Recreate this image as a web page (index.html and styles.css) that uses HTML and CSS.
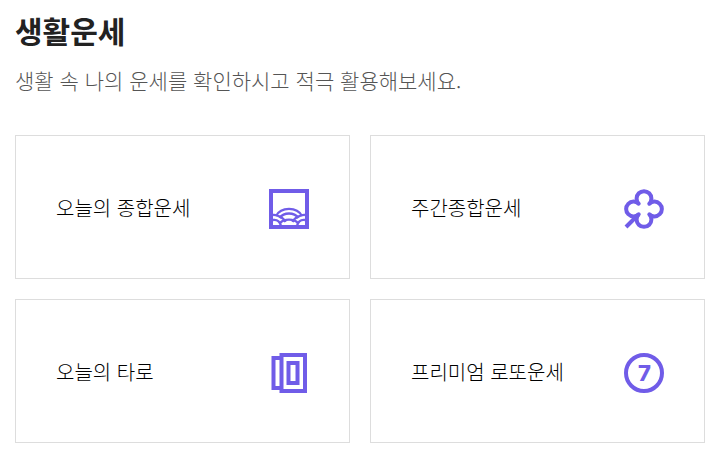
FILE: index.html
```html
<!DOCTYPE html>
<html lang="ko">
<head>
    <meta charset="UTF-8">
    <meta name="viewport" content="width=device-width, initial-scale=1.0">
    <title>생활운세</title>
    <link rel="stylesheet" href="styles.css">
</head>
<body>

    <main class="fortune">
        <header class="fortune-header">
            <h1>생활운세</h1>
            <p>생활 속 나의 운세를 확인하시고 적극 활용해보세요.</p>
        </header>

        <nav class="card-grid">
            <a class="card" href="#today">
                <span>오늘의 종합운세</span>
                <svg class="icon" viewBox="0 0 40 40" aria-hidden="true">
                    <rect x="2" y="2" width="36" height="36" stroke-width="4"/>
                    <g stroke-width="2.3">
                        <path d="M7 27 C12 17.500 28 17.500 33 27"/>
                        <path d="M10.500 29 C15 23 25 23 29.500 29"/>
                        <path d="M4 26 C8 25.500 15 29 16.500 33"/>
                        <path d="M36 26 C32 25.500 25 29 23.500 33"/>
                        <path d="M4 31 C8 30.500 11 33 12 37"/>
                        <path d="M36 31 C32 30.500 29 33 28 37"/>
                        <path d="M11 34 C15 29.500 25 29.500 29 34"/>
                    </g>
                </svg>
            </a>
            <a class="card" href="#weekly">
                <span>주간종합운세</span>
                <svg class="icon" viewBox="0 0 40 40" aria-hidden="true">
                    <path d="M14.700 14.700 A7.400 7.400 0 1 1 25.300 14.700 A7.400 7.400 0 1 1 25.300 25.300 A7.400 7.400 0 1 1 14.700 25.300 A7.400 7.400 0 1 1 14.700 14.700 Z" stroke-width="4" stroke-linejoin="round"/>
                    <path d="M14 26 L2 38" stroke-width="4"/>
                </svg>
            </a>
            <a class="card" href="#tarot">
                <span>오늘의 타로</span>
                <svg class="icon" viewBox="0 0 40 40" aria-hidden="true">
                    <path d="M11 5 H4.500 V35 H11" stroke-width="4"/>
                    <rect x="12.500" y="2" width="23.500" height="36" stroke-width="4"/>
                    <rect x="19.500" y="10" width="9" height="20" stroke-width="4"/>
                </svg>
            </a>
            <a class="card" href="#lotto">
                <span>프리미엄 로또운세</span>
                <svg class="icon" viewBox="0 0 40 40" aria-hidden="true">
                    <circle cx="20" cy="20" r="18" stroke-width="4"/>
                    <text class="icon-number" x="20.500" y="28" text-anchor="middle">7</text>
                </svg>
            </a>
        </nav>
    </main>

</body>
</html>
```
FILE: styles.css
```css
:root {
    --accent: #705ce8;
    --text-dark: #222;
    --text-muted: #555;
    --line: #ddd;
}

* {
    box-sizing: border-box;
}

body {
    margin: 0;
    background: #fff;
    color: var(--text-dark);
    font-family: "Noto Sans CJK KR", "Noto Sans", sans-serif;
}

.fortune {
    padding: 7px 13px 14px 15px;
}

/* --- Title --- */
.fortune-header h1 {
    margin: 0;
    font-size: 30px;
    font-weight: 700;
    line-height: 46px;
}

.fortune-header p {
    margin: 12px 0 0;
    color: var(--text-muted);
    font-size: 21px;
    font-weight: 300;
    line-height: 30px;
}

/* --- Cards --- */
.card-grid {
    display: grid;
    grid-template-columns: repeat(2, 1fr);
    gap: 20px;
    margin-top: 40px;
}

.card {
    display: flex;
    align-items: center;
    justify-content: space-between;
    min-height: 144px;
    padding: 42px 40px 40px;
    border: 1px solid var(--line);
    color: #000;
    font-size: 20px;
    font-weight: 300;
    line-height: 30px;
    text-decoration: none;
}

.card:hover {
    border-color: var(--accent);
}

.icon {
    flex: none;
    width: 40px;
    height: 40px;
    margin-top: 2px;
    fill: none;
    stroke: var(--accent);
}

.icon-number {
    fill: var(--accent);
    stroke: none;
    font-family: Inter, sans-serif;
    font-size: 22px;
    font-weight: 800;
}

@media (max-width: 560px) {
    .card-grid {
        grid-template-columns: 1fr;
    }
}
```
